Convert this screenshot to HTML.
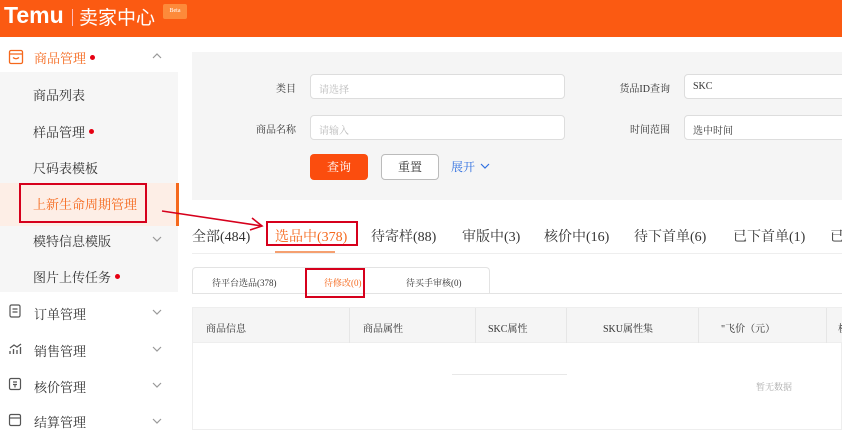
<!DOCTYPE html>
<html><head><meta charset="utf-8"><style>
*{margin:0;padding:0;box-sizing:border-box}
body{width:842px;height:430px;overflow:hidden;background:#fff;font-family:"Liberation Serif","Noto Serif CJK SC",serif;color:#333;position:relative}
.a{position:absolute}
.hdr{left:0;top:0;width:842px;height:37px;background:#fb5a12}
.side{font-size:13px;color:#333}
.dot{display:inline-block;width:5px;height:5px;border-radius:50%;background:#e60012;margin-left:4px;vertical-align:3px}
.inp{background:#fff;border:1px solid #ddd;border-radius:4px;height:25px;font-size:10px;color:#bbb;padding:6px 8px}
.lbl{font-size:10px;color:#333;text-align:right}
.tab{font-size:14px;top:226px;color:#333}
.th{font-size:10px;color:#333;top:320px}
</style></head><body>
<svg width="0" height="0" style="position:absolute"><defs><symbol id="dn" viewBox="0 0 10 6"><path d="M1 1l4 4 4-4" fill="none" stroke="#999" stroke-width="1.2"/></symbol></defs></svg>
<div class="a hdr"></div>
<div class="a" style="left:4px;top:2px;color:#fff;font:bold 23px 'Liberation Sans',sans-serif">Temu</div>
<div class="a" style="left:72px;top:9px;width:1px;height:17px;background:#fbb"></div>
<div class="a" style="left:79px;top:3px;color:#fff;font-size:19px;font-family:'Liberation Sans','Noto Sans CJK SC',sans-serif">卖家中心</div>
<div class="a" style="left:163px;top:4px;width:24px;height:15px;background:#fd8a3a;border-radius:2px;color:#fff;font-size:6px;text-align:center;line-height:15px">Beta</div>

<div class="a" style="left:0;top:72px;width:178px;height:220px;background:#f6f6f6"></div>
<div class="a" style="left:0;top:183px;width:176px;height:43px;background:#fdeee6"></div>
<div class="a" style="left:176px;top:183px;width:3px;height:43px;background:#f5681c"></div>

<svg class="a" style="left:8px;top:49px" width="16" height="16" viewBox="0 0 16 16"><rect x="1.5" y="1.5" width="13" height="13" rx="1.5" fill="none" stroke="#f5681c" stroke-width="1.3"/><path d="M1.5 5h13M5 8.5q3 2.5 6 0" fill="none" stroke="#f5681c" stroke-width="1.3"/></svg>
<div class="a side" style="left:34px;top:48px;color:#f5681c">商品管理<span class="dot"></span></div>
<svg class="a" style="left:152px;top:53px" width="10" height="6" viewBox="0 0 10 6"><path d="M1 5l4-4 4 4" fill="none" stroke="#999" stroke-width="1.2"/></svg>
<div class="a side" style="left:33px;top:85px">商品列表</div>
<div class="a side" style="left:33px;top:122px">样品管理<span class="dot"></span></div>
<div class="a side" style="left:33px;top:158px">尺码表模板</div>
<div class="a side" style="left:33px;top:194px;color:#f5681c">上新生命周期管理</div>
<div class="a" style="left:19px;top:183px;width:128px;height:40px;border:2px solid #d6001c"></div>
<div class="a side" style="left:33px;top:231px">模特信息模版</div><svg class="a" style="left:152px;top:236px" width="10" height="6"><use href="#dn"/></svg>
<div class="a side" style="left:33px;top:267px">图片上传任务<span class="dot"></span></div>
<svg class="a" style="left:8px;top:304px" width="14" height="14" viewBox="0 0 14 14"><rect x="2" y="1" width="10" height="12" rx="1.5" fill="none" stroke="#555" stroke-width="1.2"/><path d="M4.5 5h5M4.5 8h5" stroke="#555" stroke-width="1.2"/></svg>
<div class="a side" style="left:34px;top:304px">订单管理</div><svg class="a" style="left:152px;top:309px" width="10" height="6"><use href="#dn"/></svg>
<svg class="a" style="left:8px;top:341px" width="14" height="14" viewBox="0 0 14 14"><path d="M2 13V10M5.5 13V8M9 13V9M12.5 13V6M2 7l4-3 3 2 4-3" fill="none" stroke="#555" stroke-width="1.3"/></svg>
<div class="a side" style="left:34px;top:341px">销售管理</div><svg class="a" style="left:152px;top:346px" width="10" height="6"><use href="#dn"/></svg>
<svg class="a" style="left:8px;top:377px" width="14" height="14" viewBox="0 0 14 14"><rect x="1.5" y="1.5" width="11" height="11" rx="1.5" fill="none" stroke="#555" stroke-width="1.2"/><path d="M5 5h4M5 7.5h4M7 7.5v3" stroke="#555" stroke-width="1.2"/></svg>
<div class="a side" style="left:34px;top:377px">核价管理</div><svg class="a" style="left:152px;top:382px" width="10" height="6"><use href="#dn"/></svg>
<svg class="a" style="left:8px;top:413px" width="14" height="14" viewBox="0 0 14 14"><rect x="1.5" y="1.5" width="11" height="11" rx="1.5" fill="none" stroke="#555" stroke-width="1.2"/><path d="M1.5 5h11" stroke="#555" stroke-width="1.2"/></svg>
<div class="a side" style="left:34px;top:412px">结算管理</div><svg class="a" style="left:152px;top:418px" width="10" height="6"><use href="#dn"/></svg>

<div class="a" style="left:192px;top:52px;width:650px;height:148px;background:#f5f5f5"></div>
<div class="a lbl" style="left:240px;top:80px;width:56px">类目</div>
<div class="a inp" style="left:310px;top:74px;width:255px">请选择</div>
<div class="a lbl" style="left:240px;top:121px;width:56px">商品名称</div>
<div class="a inp" style="left:310px;top:115px;width:255px">请输入</div>
<div class="a lbl" style="left:596px;top:80px;width:74px">货品ID查询</div>
<div class="a inp" style="left:684px;top:74px;width:170px;color:#333">SKC</div>
<div class="a lbl" style="left:596px;top:121px;width:74px">时间范围</div>
<div class="a inp" style="left:684px;top:115px;width:170px;color:#333">选中时间</div>
<div class="a" style="left:310px;top:154px;width:58px;height:26px;background:#fb4d0e;border-radius:4px;color:#fff;font-size:12px;text-align:center;line-height:26px">查询</div>
<div class="a" style="left:381px;top:154px;width:58px;height:26px;background:#fff;border:1px solid #bbb;border-radius:4px;font-size:12px;text-align:center;line-height:24px">重置</div>
<div class="a" style="left:451px;top:158px;font-size:12px;color:#2f6fe0">展开</div>
<svg class="a" style="left:480px;top:163px" width="10" height="6" viewBox="0 0 10 6"><path d="M1 1l4 4 4-4" fill="none" stroke="#2f6fe0" stroke-width="1.2"/></svg>

<svg class="a" style="left:0;top:0" width="842" height="430"><path d="M162 211L262 226" stroke="#d6001c" stroke-width="1.6" fill="none"/><path d="M252 218l10 8-12 4" fill="none" stroke="#d6001c" stroke-width="1.6"/></svg>

<div class="a tab" style="left:192px">全部(484)</div>
<div class="a tab" style="left:275px;color:#f5681c">选品中(378)</div>
<div class="a" style="left:266px;top:221px;width:92px;height:25px;border:2px solid #d6001c"></div>
<div class="a" style="left:275px;top:251px;width:60px;height:2px;background:#f5a070"></div>
<div class="a tab" style="left:371px">待寄样(88)</div>
<div class="a tab" style="left:462px">审版中(3)</div>
<div class="a tab" style="left:544px">核价中(16)</div>
<div class="a tab" style="left:634px">待下首单(6)</div>
<div class="a tab" style="left:733px">已下首单(1)</div>
<div class="a tab" style="left:830px">已</div>
<div class="a" style="left:192px;top:253px;width:650px;height:1px;background:#eee"></div>

<div class="a" style="left:192px;top:267px;width:298px;height:27px;border:1px solid #e3e3e3;border-bottom:none;border-radius:4px 4px 0 0"></div>
<div class="a" style="left:192px;top:293px;width:650px;height:1px;background:#e3e3e3"></div>
<div class="a" style="left:212px;top:276px;font-size:9px">待平台选品(378)</div>
<div class="a" style="left:324px;top:276px;font-size:9px;color:#f5681c">待修改(0)</div>
<div class="a" style="left:305px;top:268px;width:60px;height:30px;border:2px solid #d6001c"></div>
<div class="a" style="left:406px;top:276px;font-size:9px">待买手审核(0)</div>

<div class="a" style="left:192px;top:307px;width:650px;height:123px;border:1px solid #eee"></div>
<div class="a" style="left:193px;top:308px;width:649px;height:35px;background:#f5f5f5;border-bottom:1px solid #eee"></div>
<div class="a" style="left:349px;top:308px;width:1px;height:35px;background:#e6e6e6"></div>
<div class="a" style="left:475px;top:308px;width:1px;height:35px;background:#e6e6e6"></div>
<div class="a" style="left:566px;top:308px;width:1px;height:35px;background:#e6e6e6"></div>
<div class="a" style="left:698px;top:308px;width:1px;height:35px;background:#e6e6e6"></div>
<div class="a" style="left:826px;top:308px;width:1px;height:35px;background:#e6e6e6"></div>
<div class="a th" style="left:206px">商品信息</div>
<div class="a th" style="left:363px">商品属性</div>
<div class="a th" style="left:488px">SKC属性</div>
<div class="a th" style="left:603px">SKU属性集</div>
<div class="a th" style="left:721px">"飞价（元）</div>
<div class="a th" style="left:838px">核</div>
<div class="a" style="left:452px;top:374px;width:115px;height:1px;background:#e8e8e8"></div>
<div class="a" style="left:756px;top:380px;font-size:9px;color:#aaa">暂无数据</div>
</body></html>
